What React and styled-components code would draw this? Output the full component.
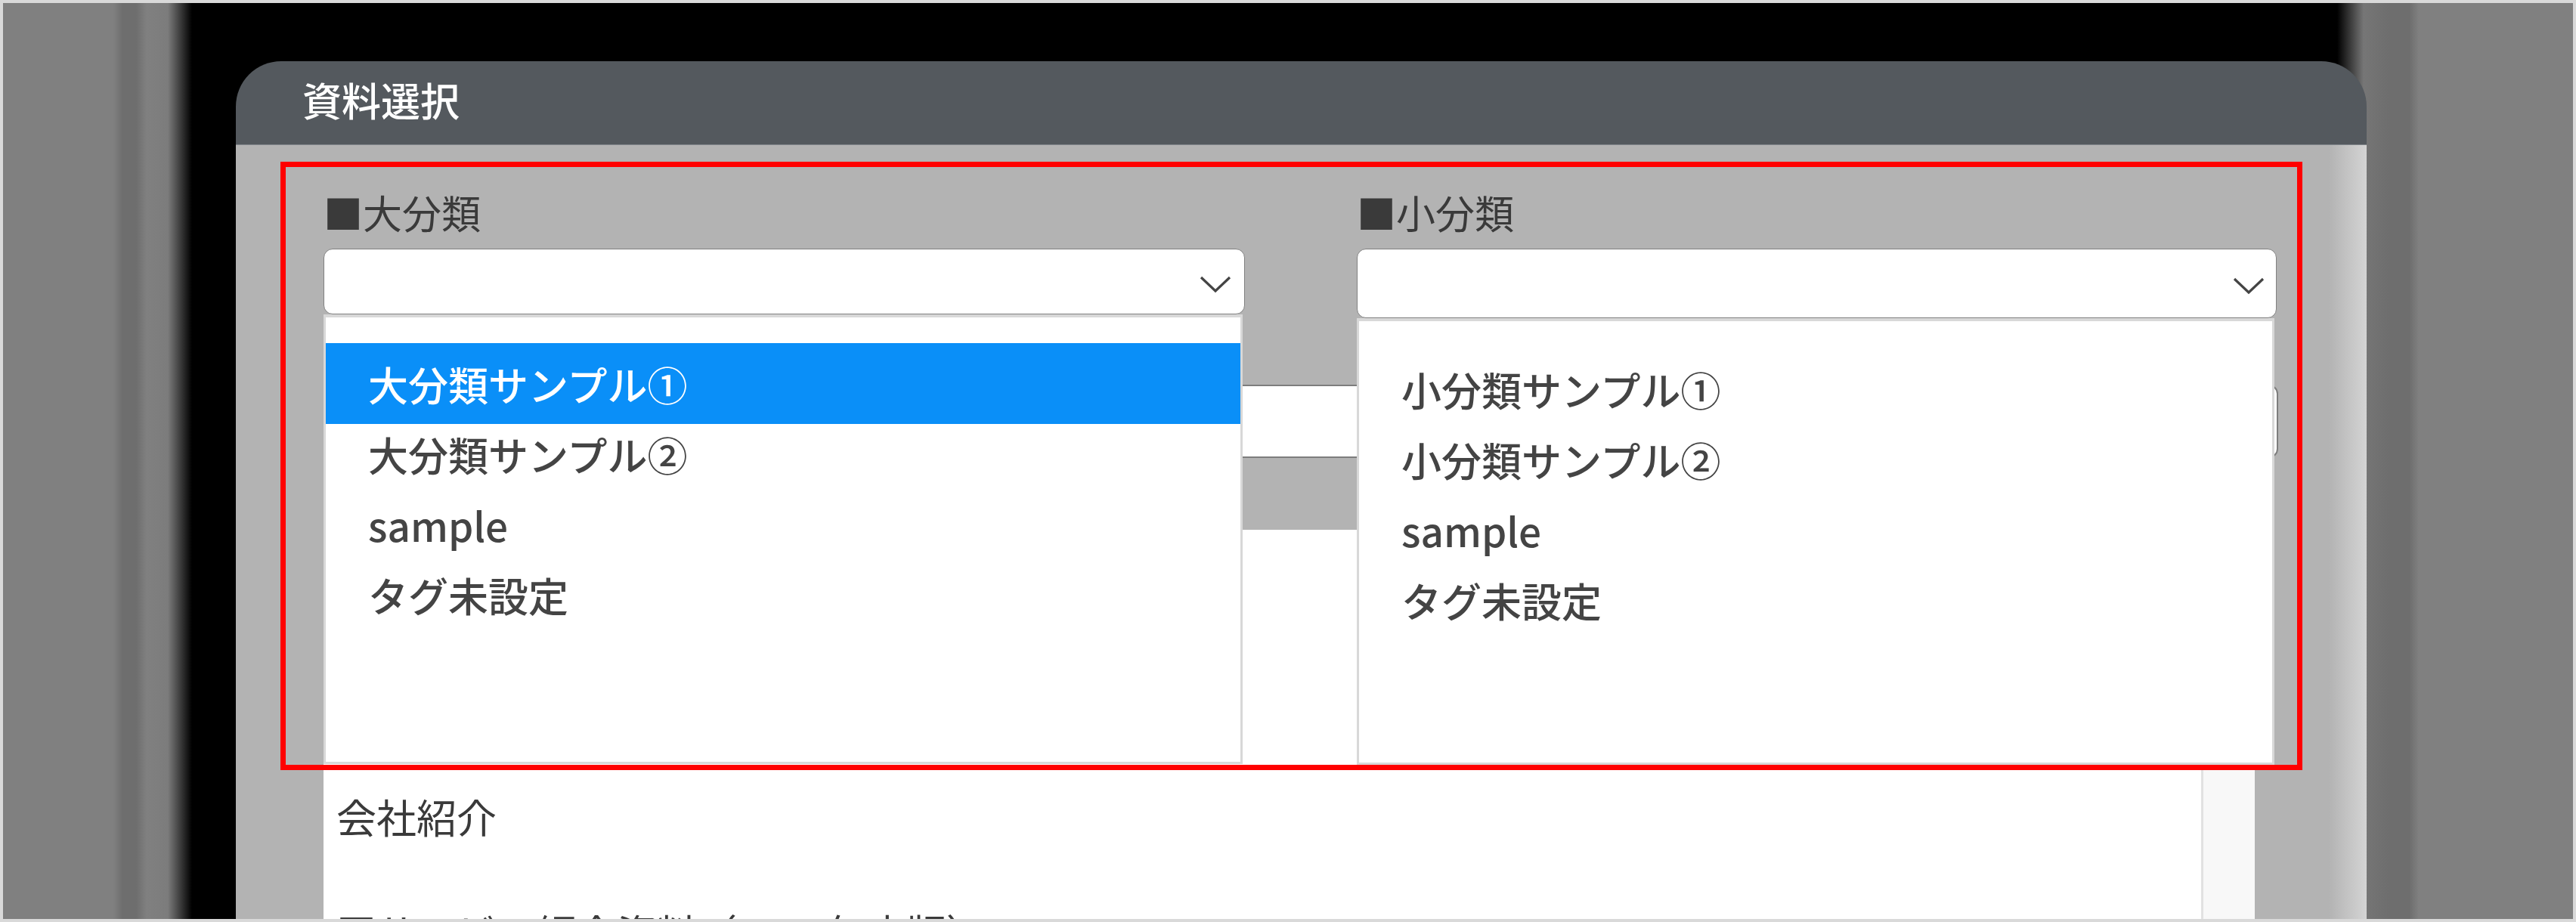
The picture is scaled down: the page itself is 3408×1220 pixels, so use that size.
import React from "react";
import styled, { createGlobalStyle } from "styled-components";

const Global = createGlobalStyle`
  html, body {
    margin: 0;
    padding: 0;
    background: #ffffff;
  }
  body {
    font-family: "Noto Sans CJK JP", "Noto Sans", sans-serif;
  }
`;

const Frame = styled.div`
  width: 3408px;
  height: 1220px;
  box-sizing: border-box;
  border: 4px solid #d9d9d9;
  overflow: hidden;
  padding: 77px 0 0 308px;
  background: linear-gradient(
    to right,
    #808080 0px,
    #808080 150px,
    #6e6e6e 162px,
    #6e6e6e 180px,
    #808080 194px,
    #7c7c7c 222px,
    #000000 254px,
    #000000 3092px,
    #767676 3127px,
    #6e6e6e 3160px,
    #6e6e6e 3188px,
    #808080 3200px,
    #808080 100%
  );
  background-origin: border-box;
`;

const Dialog = styled.div`
  width: 2819px;
  height: 100%;
  display: flex;
  flex-direction: column;
  overflow: hidden;
  border-radius: 60px 60px 0 0;
`;

const Header = styled.div`
  flex: none;
  height: 111px;
  box-sizing: border-box;
  display: flex;
  align-items: center;
  padding: 0 0 9px 88px;
  background: #54595e;
  border-bottom: 1px solid #80858a;
  color: #ffffff;
  font-size: 52px;
  font-weight: 500;
`;

const Body = styled.div`
  flex: 1;
  position: relative;
  padding: 58px 0 0 116px;
  background: linear-gradient(to right, #b3b3b3 calc(100% - 50px), #d4d4d4 100%);
`;

const FilterRow = styled.div`
  display: grid;
  grid-template-columns: 1219px 1217px;
  column-gap: 148px;
  align-items: start;
`;

const Label = styled.div`
  font-size: 52px;
  line-height: 62px;
  color: #3a3a3a;
  margin-bottom: 17px;
`;

const SelectWrap = styled.div`
  position: relative;
`;

const SelectBox = styled.div`
  height: ${(p) => p.$h}px;
  box-sizing: border-box;
  background: #ffffff;
  border: 1px solid #808080;
  border-radius: 12px;
  display: flex;
  align-items: center;
  justify-content: flex-end;
  padding: 6px ${(p) => p.$pr}px 0 0;
`;

const DropList = styled.div`
  position: absolute;
  top: 100%;
  left: 0;
  width: calc(100% - 3px);
  height: ${(p) => p.$h}px;
  box-sizing: border-box;
  background: #ffffff;
  border: 3px solid #d8d8d8;
  border-top-width: 4px;
  padding-top: ${(p) => p.$pt}px;
  z-index: 2;
`;

const Option = styled.div`
  height: 93px;
  display: flex;
  align-items: center;
  padding-left: 56px;
  font-size: 53px;
  font-weight: 500;
  color: ${(p) => (p.$active ? "#ffffff" : "#444444")};
  background: ${(p) => (p.$active ? "#0a8ff8" : "transparent")};
  box-shadow: ${(p) =>
    p.$active ? "0 -7px 0 #0a8ff8, 0 7px 0 #0a8ff8" : "none"};
`;

const NameInput = styled.div`
  margin-top: 88px;
  width: 2586px;
  height: 97px;
  box-sizing: border-box;
  border: 2px solid #7d7d7d;
  border-radius: 12px;
  background: #ffffff;
`;

const Table = styled.div`
  margin-top: 95px;
  width: 2555px;
  height: 640px;
  display: flex;
  background: #ffffff;
`;

const Rows = styled.div`
  flex: 1;
  padding-top: 313px;
`;

const Row = styled.div`
  height: 153px;
  box-sizing: border-box;
  display: flex;
  align-items: center;
  padding: 0 0 22px 17px;
  font-size: 53px;
  color: #3a3a3a;
  white-space: nowrap;
`;

const Track = styled.div`
  width: 68px;
  border-left: 3px solid #e2e2e2;
  background: #f8f8f8;
`;

const Callout = styled.div`
  position: absolute;
  left: 59px;
  top: 22px;
  width: 2675px;
  height: 805px;
  box-sizing: border-box;
  border: 7px solid #ff0000;
  z-index: 5;
  pointer-events: none;
`;

const Chevron = () => (
  <svg width="44" height="24" viewBox="0 0 44 24">
    <polyline
      points="3,3 22,21 41,3"
      fill="none"
      stroke="#444444"
      strokeWidth="3.2"
      strokeLinejoin="miter"
    />
  </svg>
);

const bigItems = ["大分類サンプル①", "大分類サンプル②", "sample", "タグ未設定"];
const smallItems = ["小分類サンプル①", "小分類サンプル②", "sample", "タグ未設定"];
const docs = ["会社紹介", "■サービス紹介資料（2024年度版）"];

const App = () => {
  return (
    <>
      <Global />
      <Frame>
        <Dialog>
          <Header>資料選択</Header>
          <Body>
            <FilterRow>
              <div>
                <Label>■大分類</Label>
                <SelectWrap>
                  <SelectBox $h={87} $pr={16}>
                    <Chevron />
                  </SelectBox>
                  <DropList $h={595} $pt={41}>
                    {bigItems.map((t, i) => (
                      <Option key={t} $active={i === 0}>
                        {t}
                      </Option>
                    ))}
                  </DropList>
                </SelectWrap>
              </div>
              <div>
                <Label>■小分類</Label>
                <SelectWrap>
                  <SelectBox $h={92} $pr={14}>
                    <Chevron />
                  </SelectBox>
                  <DropList $h={591} $pt={43}>
                    {smallItems.map((t) => (
                      <Option key={t}>{t}</Option>
                    ))}
                  </DropList>
                </SelectWrap>
              </div>
            </FilterRow>
            <NameInput />
            <Table>
              <Rows>
                {docs.map((d) => (
                  <Row key={d}>{d}</Row>
                ))}
              </Rows>
              <Track />
            </Table>
            <Callout />
          </Body>
        </Dialog>
      </Frame>
    </>
  );
};

export default App;
